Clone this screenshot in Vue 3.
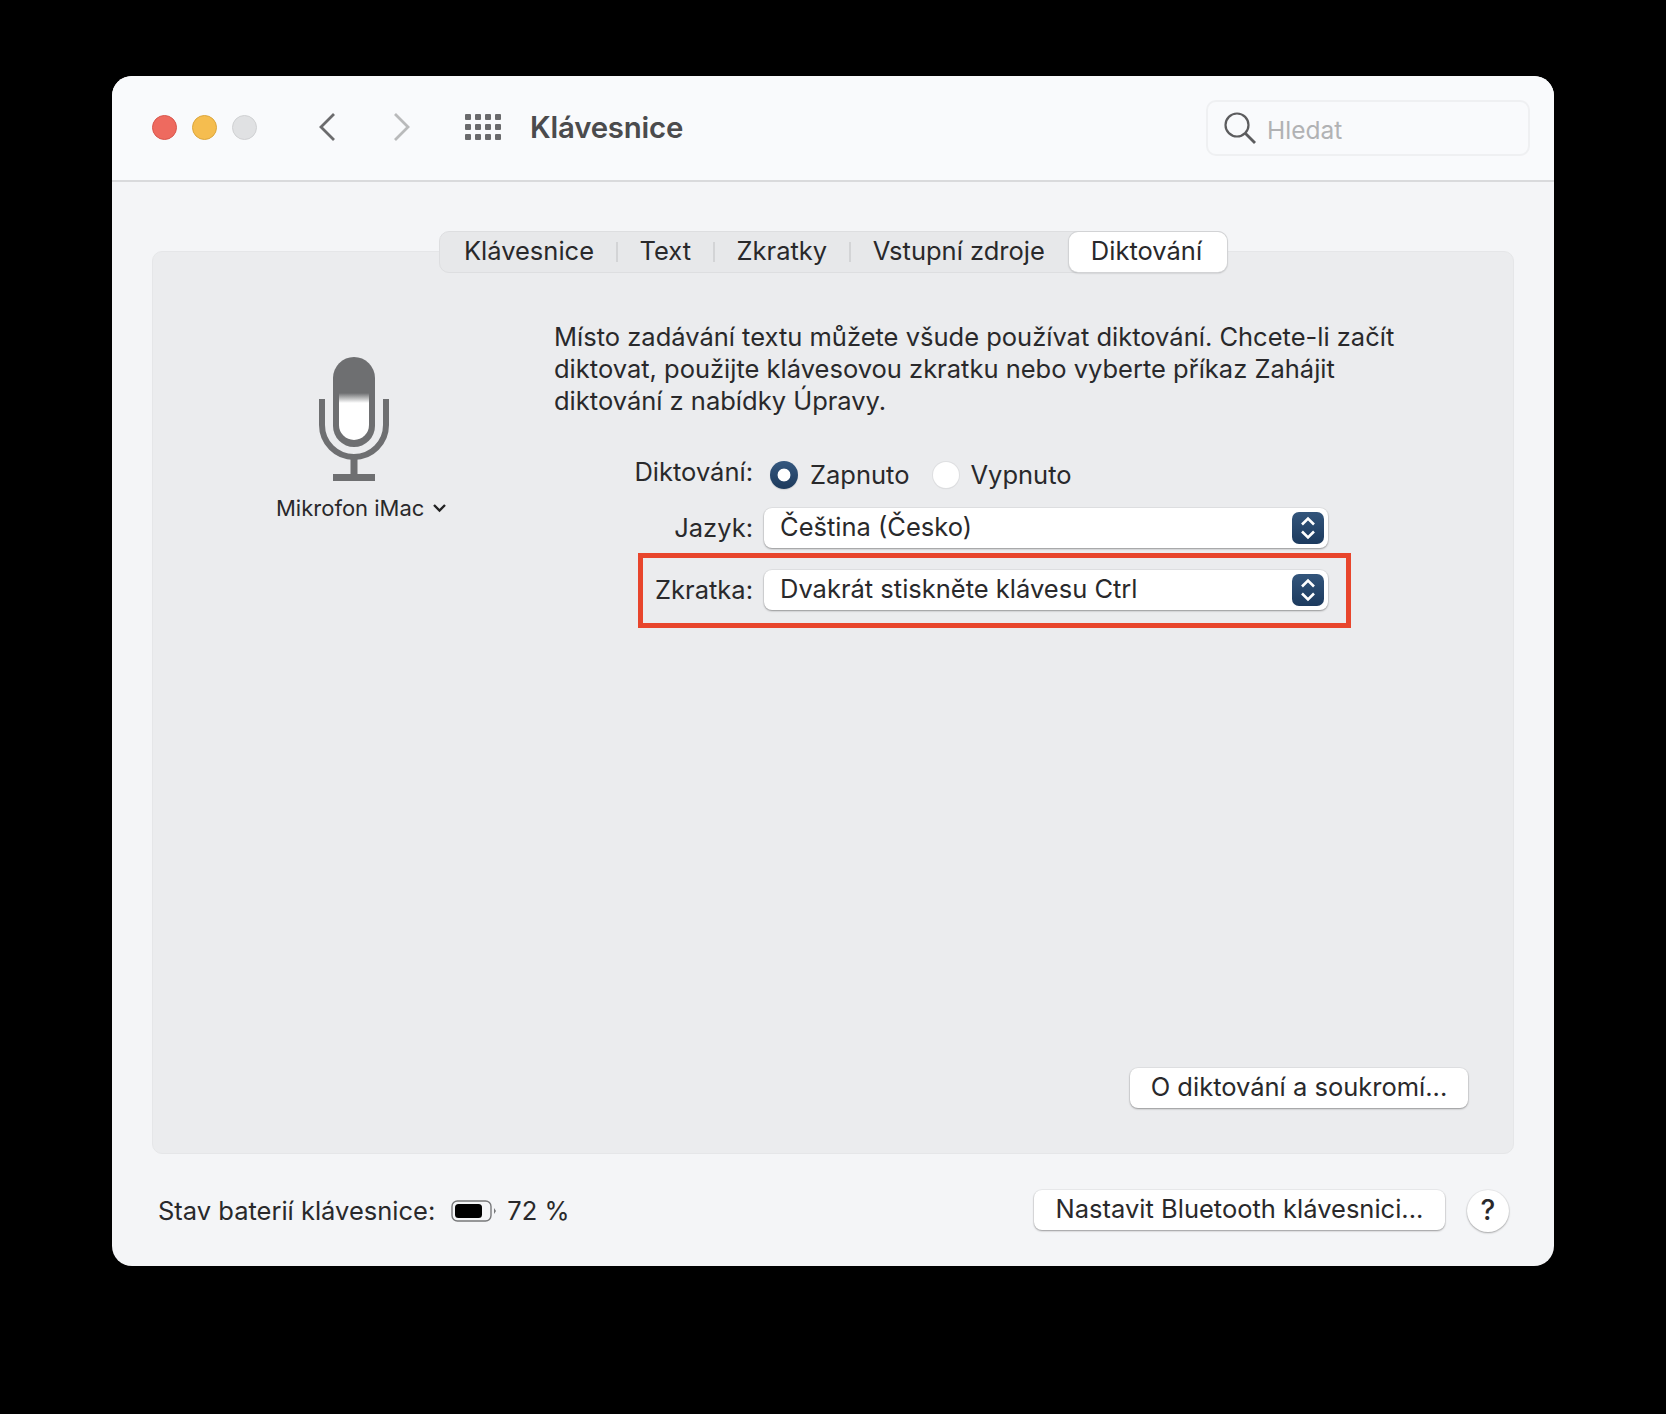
<template>
  <div class="screen">
    <div class="window">
      <header class="titlebar">
        <div class="lights">
          <span class="light red"></span>
          <span class="light yellow"></span>
          <span class="light grey"></span>
        </div>
        <svg class="nav back" width="18" height="30" viewBox="0 0 18 30">
          <path d="M16 2 L3 15 L16 28" fill="none" stroke="#6b6b6d" stroke-width="2.8" />
        </svg>
        <svg class="nav forward" width="18" height="30" viewBox="0 0 18 30">
          <path d="M2 2 L15 15 L2 28" fill="none" stroke="#b9babb" stroke-width="2.8" />
        </svg>
        <div class="apps">
          <i v-for="n in 12" :key="n"></i>
        </div>
        <h1 class="title">Klávesnice</h1>
        <div class="search">
          <svg width="34" height="34" viewBox="0 0 34 34">
            <circle cx="14" cy="14" r="11.5" fill="none" stroke="#5c5c5e" stroke-width="2.2" />
            <path d="M22.5 22.5 L32 32" fill="none" stroke="#5c5c5e" stroke-width="2.8" />
          </svg>
          <span>Hledat</span>
        </div>
      </header>

      <main class="content">
        <nav class="tabs">
          <template v-for="(tab, i) in tabs" :key="tab">
            <span class="tab" :class="{ active: tab === 'Diktování' }">{{ tab }}</span>
            <span v-if="i < tabs.length - 2" class="sep"></span>
          </template>
        </nav>

        <section class="pane">
          <div class="columns">
            <div class="mic-col">
              <svg class="mic" width="70" height="125" viewBox="0 0 70 125">
                <defs>
                  <linearGradient id="micFill" x1="0" y1="36" x2="0" y2="46" gradientUnits="userSpaceOnUse">
                    <stop offset="0" stop-color="#6e6f71" />
                    <stop offset="1" stop-color="#ffffff" />
                  </linearGradient>
                </defs>
                <rect x="14" y="0" width="42" height="90" rx="21" fill="#6e6f71" />
                <path d="M20 34 H50 V68 A15 15 0 0 1 20 68 Z" fill="url(#micFill)" />
                <path d="M3 42 V68 A32 32 0 0 0 67 68 V42" fill="none" stroke="#6e6f71" stroke-width="6" />
                <rect x="31.5" y="98" width="7" height="20" fill="#6e6f71" />
                <rect x="14" y="117" width="42" height="7" fill="#6e6f71" />
              </svg>
              <div class="mic-label">
                Mikrofon iMac
                <svg width="15" height="10" viewBox="0 0 15 10">
                  <path d="M2 2 L7.5 7.5 L13 2" fill="none" stroke="#222" stroke-width="2.4" />
                </svg>
              </div>
            </div>

            <div class="settings">
              <p class="desc">
                Místo zadávání textu můžete všude používat diktování. Chcete-li začít<br />
                diktovat, použijte klávesovou zkratku nebo vyberte příkaz Zahájit<br />
                diktování z nabídky Úpravy.
              </p>

              <div class="form">
                <div class="row">
                  <label class="raised">Diktování:</label>
                  <div class="radios">
                    <span class="radio on"></span>
                    <span class="radio-text">Zapnuto</span>
                    <span class="radio"></span>
                    <span class="radio-text">Vypnuto</span>
                  </div>
                </div>
                <div class="row">
                  <label>Jazyk:</label>
                  <div class="select">
                    <span>Čeština (Česko)</span>
                    <svg class="stepper" width="32" height="32" viewBox="0 0 32 32">
                      <path d="M10 12.5 L16 6.5 L22 12.5 M10 19.5 L16 25.5 L22 19.5" fill="none" stroke="#fff" stroke-width="2.6" />
                    </svg>
                  </div>
                </div>
                <div class="row marked">
                  <label>Zkratka:</label>
                  <div class="select">
                    <span>Dvakrát stiskněte klávesu Ctrl</span>
                    <svg class="stepper" width="32" height="32" viewBox="0 0 32 32">
                      <path d="M10 12.5 L16 6.5 L22 12.5 M10 19.5 L16 25.5 L22 19.5" fill="none" stroke="#fff" stroke-width="2.6" />
                    </svg>
                  </div>
                  <div class="frame"></div>
                </div>
              </div>
            </div>
          </div>

          <button class="btn privacy">O diktování a soukromí...</button>
        </section>

        <footer class="footer">
          <span class="battery-label">Stav baterií klávesnice:</span>
          <svg class="battery" width="46" height="24" viewBox="0 0 46 24">
            <rect x="1" y="2" width="39" height="20" rx="5.5" fill="#f4f5f7" stroke="#77787a" stroke-width="1.4" />
            <rect x="4" y="5" width="27" height="14" rx="3.5" fill="#000" />
            <path d="M43 9 L45 12 L43 15 Z" fill="#77787a" />
          </svg>
          <span class="percent">72 %</span>
          <button class="btn bluetooth">Nastavit Bluetooth klávesnici...</button>
          <button class="help">?</button>
        </footer>
      </main>
    </div>
  </div>
</template>

<script setup>
const tabs = ['Klávesnice', 'Text', 'Zkratky', 'Vstupní zdroje', 'Diktování']
</script>

<style>
html,
body {
  background: #000;
}
</style>

<style scoped>
.screen {
  box-sizing: border-box;
  height: 1414px;
  padding: 76px 112px 0;
  font-family: Inter, "Liberation Sans", sans-serif;
  font-size: 25.5px;
  color: #29292b;
}

.window {
  width: 1442px;
  height: 1190px;
  border-radius: 20px;
  overflow: hidden;
  background: #f4f5f7;
  display: flex;
  flex-direction: column;
}

.titlebar {
  box-sizing: border-box;
  flex: none;
  height: 106px;
  padding: 0 24px 2px 39.5px;
  background: #f9fafc;
  border-bottom: 2px solid #d9dadc;
  display: flex;
  align-items: center;
}

.lights {
  display: flex;
  gap: 15px;
}

.light {
  box-sizing: border-box;
  width: 25px;
  height: 25px;
  border-radius: 50%;
}

.red {
  background: #ee6a5f;
  border: 1px solid #d9564c;
}

.yellow {
  background: #f5bd4f;
  border: 1px solid #dca63c;
}

.grey {
  background: #e0e1e3;
  border: 1px solid #cfd0d2;
}

.nav {
  flex: none;
}

.back {
  margin-left: 61.5px;
}

.forward {
  margin-left: 57px;
}

.apps {
  margin-left: 54px;
  width: 36px;
  display: grid;
  grid-template-columns: repeat(4, 6px);
  grid-auto-rows: 6px;
  justify-content: space-between;
  row-gap: 4px;
}

.apps i {
  background: #6a6a6c;
  border-radius: 1px;
}

.title {
  margin: 0 0 0 29px;
  font-size: 29.4px;
  font-weight: 600;
  letter-spacing: -0.2px;
  color: #4b4b4d;
}

.search {
  box-sizing: border-box;
  margin: 2px 0 0 auto;
  width: 324px;
  height: 56px;
  padding: 0 0 0 15px;
  border: 2px solid #eff0f2;
  border-radius: 10px;
  display: flex;
  align-items: center;
  gap: 10px;
  font-size: 24.5px;
  color: #b1b2b4;
}

.search span {
  margin-top: 4px;
}

.content {
  flex: 1;
  min-height: 0;
  padding: 49px 40px 0;
  display: flex;
  flex-direction: column;
}

.tabs {
  box-sizing: border-box;
  position: relative;
  z-index: 1;
  align-self: center;
  height: 42px;
  margin-bottom: -22px;
  background: #e7e8ea;
  border: 1px solid #dddee0;
  border-radius: 10px;
  display: flex;
  align-items: center;
}

.tab {
  padding: 0 21.75px 2px;
  line-height: 38px;
  white-space: nowrap;
}

.tab:first-child {
  padding-left: 24px;
}

.tab:nth-last-child(2) {
  padding-right: 24px;
}

.tab.active {
  margin: 0 -1px 0 0;
  padding: 0 25px 2px 22px;
  background: #fff;
  border-radius: 9px;
  box-shadow: 0 0 0 1px #d2d3d5, 0 1px 2px rgba(0, 0, 0, 0.3);
}

.sep {
  width: 2px;
  height: 20px;
  background: #d3d4d6;
}

.pane {
  box-sizing: border-box;
  flex: none;
  height: 903px;
  padding: 69px 45px 45px 0;
  background: #ebecee;
  border: 1px solid #e5e6e8;
  border-radius: 10px;
  display: flex;
  flex-direction: column;
}

.columns {
  flex: 1;
  display: grid;
  grid-template-columns: 401px 1fr;
}

.mic-col {
  padding-top: 36px;
}

.mic {
  display: block;
  margin-left: 166px;
}

.mic-label {
  margin: 11px 0 0 123px;
  font-size: 22px;
  line-height: 30px;
  display: flex;
  align-items: center;
  gap: 8px;
  white-space: nowrap;
}

.desc {
  margin: 0;
  line-height: 32px;
  white-space: nowrap;
}

.form {
  margin: 38px 0 0 74px;
  display: flex;
  flex-direction: column;
  gap: 13px;
}

.row {
  position: relative;
  height: 40px;
  display: flex;
  align-items: center;
}

.row label {
  width: 125px;
  margin-right: 11px;
  margin-bottom: 2px;
  text-align: right;
}

.row label.raised {
  margin-bottom: 8px;
}

.marked {
  margin-top: 9px;
}

.frame {
  box-sizing: border-box;
  position: absolute;
  left: 10px;
  top: -17px;
  width: 713px;
  height: 75px;
  border: 5px solid #e8452c;
  pointer-events: none;
}

.radios {
  display: flex;
  align-items: center;
}

.radio {
  box-sizing: border-box;
  width: 26px;
  height: 26px;
  margin-left: 7px;
  border-radius: 50%;
  background: #fff;
  box-shadow: 0 0 0 1px #dedfe1, 0 1px 1px rgba(0, 0, 0, 0.12);
}

.radio.on {
  width: 28px;
  height: 28px;
  margin-left: 6px;
  background: radial-gradient(circle, #fff 6px, transparent 6.8px), linear-gradient(#35587f, #1d3a5c);
  box-shadow: 0 1px 1px rgba(0, 0, 0, 0.12);
}

.radio-text {
  margin-left: 12px;
  margin-right: 16px;
  margin-bottom: 2px;
}

.select {
  box-sizing: border-box;
  width: 564px;
  height: 40px;
  padding: 0 4px 0 16px;
  background: #fff;
  border-radius: 8px;
  box-shadow: 0 0 0 1px rgba(0, 0, 0, 0.04), 0 1px 2px rgba(0, 0, 0, 0.35);
  display: flex;
  align-items: center;
  justify-content: space-between;
}

.select span {
  margin-bottom: 4px;
}

.stepper {
  flex: none;
  border-radius: 7px;
  background: linear-gradient(#33557b, #1c3a5e);
}

.btn {
  height: 40px;
  padding: 0 0 4px;
  border: none;
  border-radius: 8px;
  background: #fff;
  font: inherit;
  color: inherit;
  box-shadow: 0 0 0 1px rgba(0, 0, 0, 0.04), 0 1px 2px rgba(0, 0, 0, 0.35);
}

.privacy {
  align-self: flex-end;
  width: 338px;
}

.footer {
  height: 112px;
  padding: 36px 5px 0 6px;
  box-sizing: border-box;
  display: flex;
  align-items: flex-start;
}

.battery-label,
.percent {
  line-height: 42px;
}

.battery {
  margin: 9px 0 0 16px;
}

.percent {
  margin-left: 10px;
}

.bluetooth {
  margin-left: auto;
  width: 411px;
}

.help {
  width: 42px;
  height: 42px;
  margin-left: 22px;
  padding: 0 0 2px;
  border: none;
  border-radius: 50%;
  background: #fff;
  font: inherit;
  font-size: 28px;
  font-weight: 500;
  color: inherit;
  box-shadow: 0 0 0 1px rgba(0, 0, 0, 0.04), 0 1px 2px rgba(0, 0, 0, 0.3);
}
</style>
